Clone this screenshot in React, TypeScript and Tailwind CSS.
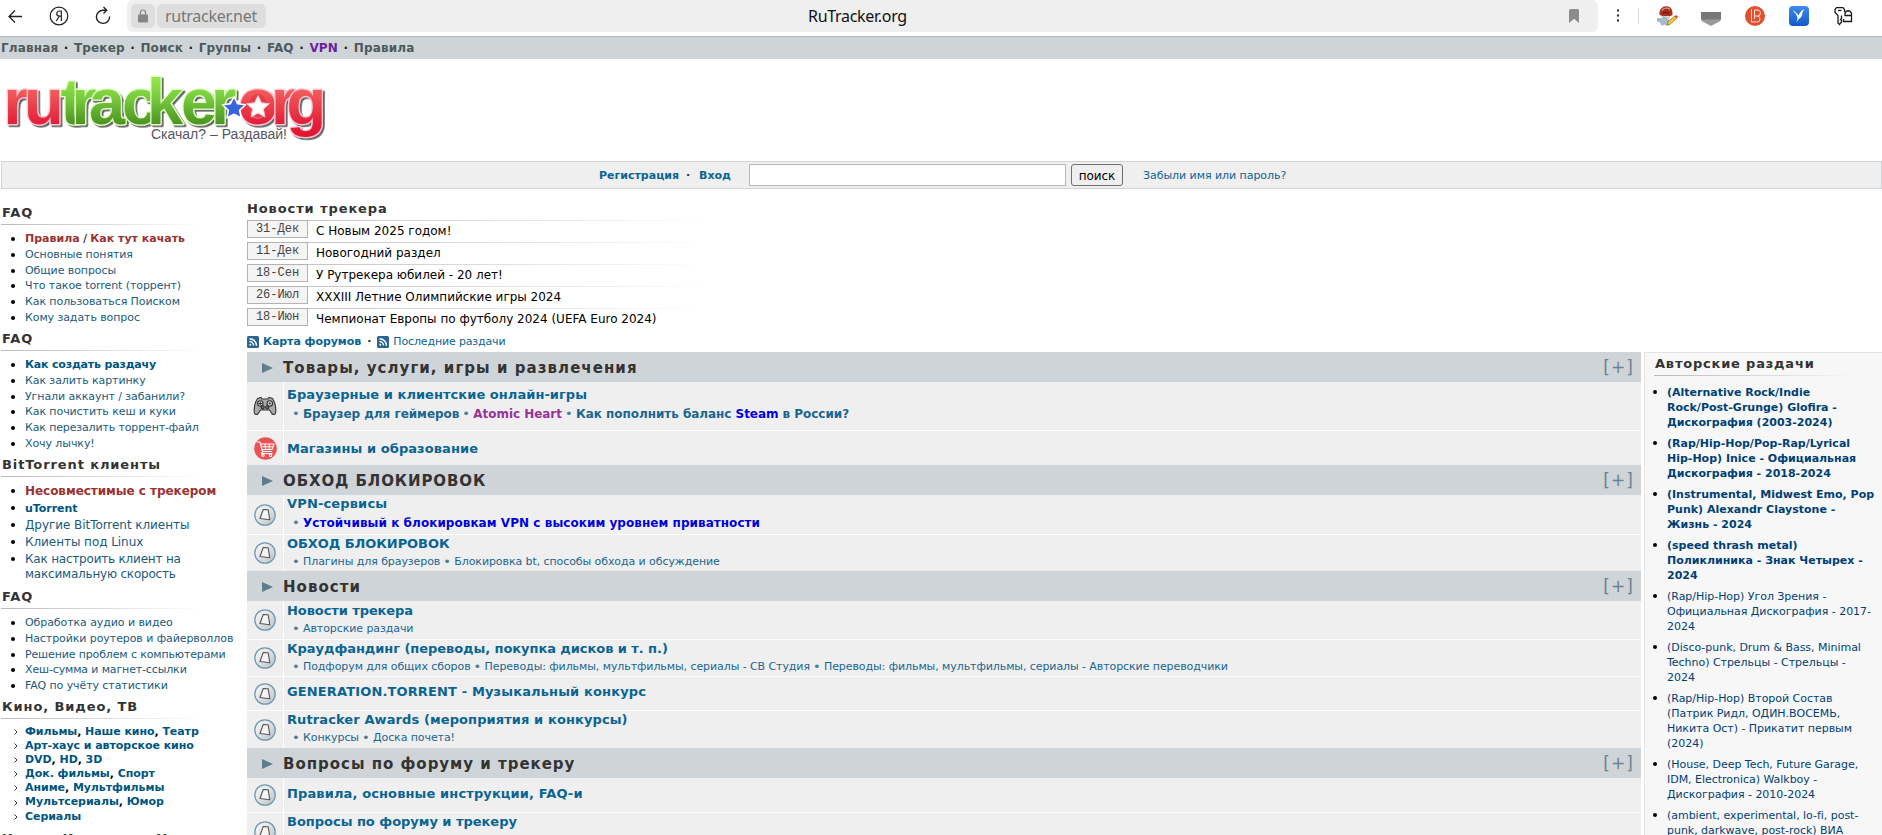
import type { ReactNode } from "react";

type Sub = { text: ReactNode; color?: string };
type Forum = {
  title: string;
  subs?: Sub[];
  icon?: "pad" | "cart";
  bold?: boolean;
  height: string;
  pad: string;
  track?: string;
};
type Category = { title: string; track: string; forums: Forum[] };

const categories: Category[] = [
  {
    title: "Товары, услуги, игры и развлечения",
    track: "tracking-[1.05px]",
    forums: [
      {
        title: "Браузерные и клиентские онлайн-игры",
        icon: "pad",
        bold: true,
        height: "h-[48px]",
        pad: "pt-[4px]",
        track: "tracking-[0.05px]",
        subs: [
          { text: "Браузер для геймеров", color: "tracking-[-0.04px]" },
          { text: "Atomic Heart", color: "text-[#993399] tracking-[-0.04px]" },
          {
            color: "tracking-[-0.04px]",
            text: (
              <>
                Как пополнить баланс <span className="text-[#0000dd]">Steam</span> в России?
              </>
            ),
          },
        ],
      },
      {
        title: "Магазины и образование",
        icon: "cart",
        height: "h-[35px]",
        pad: "pt-[9px]",
        track: "tracking-[0.08px]",
      },
    ],
  },
  {
    title: "ОБХОД БЛОКИРОВОК",
    track: "tracking-[0.9px]",
    forums: [
      {
        title: "VPN-сервисы",
        bold: true,
        height: "h-[39px]",
        pad: "pt-0",
        track: "tracking-[0.15px]",
        subs: [
          {
            text: "Устойчивый к блокировкам VPN с высоким уровнем приватности",
            color: "text-[#0000dd] tracking-[0.05px]",
          },
        ],
      },
      {
        title: "ОБХОД БЛОКИРОВОК",
        height: "h-[37px]",
        pad: "pt-0",
        track: "tracking-[-0.07px]",
        subs: [{ text: "Плагины для браузеров" }, { text: "Блокировка bt, способы обхода и обсуждение" }],
      },
    ],
  },
  {
    title: "Новости",
    track: "tracking-[1.05px]",
    forums: [
      {
        title: "Новости трекера",
        height: "h-[38px]",
        pad: "pt-[1px]",
        track: "tracking-[-0.08px]",
        subs: [{ text: "Авторские раздачи" }],
      },
      {
        title: "Краудфандинг (переводы, покупка дисков и т. п.)",
        height: "h-[37px]",
        pad: "pt-0",
        track: "tracking-[-0.06px]",
        subs: [
          { text: "Подфорум для общих сборов" },
          { text: "Переводы: фильмы, мультфильмы, сериалы - СВ Студия" },
          { text: "Переводы: фильмы, мультфильмы, сериалы - Авторские переводчики" },
        ],
      },
      {
        title: "GENERATION.TORRENT - Музыкальный конкурс",
        height: "h-[34px]",
        pad: "pt-[6px]",
        track: "tracking-[0.14px]",
      },
      {
        title: "Rutracker Awards (мероприятия и конкурсы)",
        height: "h-[38px]",
        pad: "pt-0",
        track: "tracking-[0.1px]",
        subs: [{ text: "Конкурсы" }, { text: "Доска почета!" }],
      },
    ],
  },
  {
    title: "Вопросы по форуму и трекеру",
    track: "tracking-[0.98px]",
    forums: [
      {
        title: "Правила, основные инструкции, FAQ-и",
        height: "h-[34px]",
        pad: "pt-[7px]",
        track: "tracking-[0.12px]",
      },
      {
        title: "Вопросы по форуму и трекеру",
        height: "h-[38px]",
        pad: "pt-0",
        track: "tracking-[-0.02px]",
        subs: [{ text: "Предложения по улучшению форума и трекера" }],
      },
    ],
  },
];

const news = [
  ["31-Дек", "С Новым 2025 годом!"],
  ["11-Дек", "Новогодний раздел"],
  ["18-Сен", "У Рутрекера юбилей - 20 лет!"],
  ["26-Июл", "XXXIII Летние Олимпийские игры 2024"],
  ["18-Июн", "Чемпионат Европы по футболу 2024 (UEFA Euro 2024)"],
];

const releases = [
  { bold: true, lines: ["(Alternative Rock/Indie", "Rock/Post-Grunge) Glofira -", "Дискография (2003-2024)"] },
  { bold: true, lines: ["(Rap/Hip-Hop/Pop-Rap/Lyrical", "Hip-Hop) Inice - Официальная", "Дискография - 2018-2024"] },
  { bold: true, lines: ["(Instrumental, Midwest Emo, Pop", "Punk) Alexandr Claystone -", "Жизнь - 2024"] },
  { bold: true, lines: ["(speed thrash metal)", "Поликлиника - Знак Четырех -", "2024"] },
  { lines: ["(Rap/Hip-Hop) Угол Зрения -", "Официальная Дискография - 2017-", "2024"] },
  { lines: ["(Disco-punk, Drum & Bass, Minimal", "Techno) Стрельцы - Стрельцы -", "2024"] },
  { lines: ["(Rap/Hip-Hop) Второй Состав", "(Патрик Ридл, ОДИН.ВОСЕМЬ,", "Никита Ост) - Прикатит первым", "(2024)"] },
  { lines: ["(House, Deep Tech, Future Garage,", "IDM, Electronica) Walkboy -", "Дискография - 2010-2024"] },
  { lines: ["(ambient, experimental, lo-fi, post-", "punk, darkwave, post-rock) ВИА"] },
];

const kino = [
  ["Фильмы", "Наше кино", "Театр"],
  ["Арт-хаус и авторское кино"],
  ["DVD", "HD", "3D"],
  ["Док. фильмы", "Спорт"],
  ["Аниме", "Мультфильмы"],
  ["Мультсериалы", "Юмор"],
  ["Сериалы"],
];

function BrowserBar() {
  return (
    <header className="flex h-9 items-start bg-white font-['Noto_Sans',sans-serif]">
      <div className="flex h-8 w-[127px] shrink-0 items-center">
        <svg className="ml-2 h-4 w-[14px]" viewBox="0 0 14 16" fill="none" stroke="#222" strokeWidth="1.3">
          <path d="M14 8.5H1M7 2.5l-6 6 6 6" />
        </svg>
        <svg className="ml-[27px] h-5 w-5" viewBox="0 0 20 20" fill="none" stroke="#222" strokeWidth="1.2">
          <circle cx="10" cy="10" r="8.8" />
          <path d="M12.3 15V5h-1.8c-3.7 0-3.7 5.2 0 5.2h1.8M10.2 10.2L7.3 15" />
        </svg>
        <svg className="ml-[26px] h-5 w-4" viewBox="0 0 16 20" fill="none" stroke="#222" strokeWidth="1.4">
          <path d="M14.6 10.5A6.6 6.6 0 1 1 8 4.2h3.5M8.5 1l3.2 3.2-3.2 3.2" />
        </svg>
      </div>
      <div className="flex h-8 w-[1471px] shrink-0 items-center rounded-[6px] bg-[#efefef] pl-1">
        <div className="flex h-6 w-6 items-center justify-center rounded-[5px] bg-[#dedede]">
          <svg className="h-[14px] w-[10px]" viewBox="0 0 10 14">
            <path d="M2.5 6V3.5a2.5 2.5 0 0 1 5 0V6" fill="none" stroke="#858585" strokeWidth="1.2" />
            <rect y="5.5" width="10" height="8" rx="1" fill="#858585" />
          </svg>
        </div>
        <div className="ml-[2px] flex h-6 w-[109px] items-center rounded-[5px] bg-[#dedede] pl-[8px] text-[16px] tracking-[-0.3px] text-[#777]">
          rutracker.net
        </div>
        <div className="ml-[542px] w-[110px] text-[16px] tracking-[-0.3px] text-[#111]">RuTracker.org</div>
        <svg className="ml-auto mr-[19px] h-[14px] w-[10px]" viewBox="0 0 10 14">
          <path d="M0 1.5Q0 0 1.5 0h7Q10 0 10 1.5V14L5 9.8 0 14z" fill="#8b8b8b" />
        </svg>
      </div>
      <div className="flex h-8 flex-1 items-center">
        <svg className="ml-[17px] h-[14px] w-[6px]" viewBox="0 0 6 14" fill="#222">
          <rect x="2" y="0.5" width="2" height="2" />
          <rect x="2" y="5.5" width="2" height="2" />
          <rect x="2" y="10.5" width="2" height="2" />
        </svg>
        <span className="ml-[17px] h-4 w-px bg-[#ddd]" />
        <svg className="ml-[18px] h-5 w-[22px]" viewBox="0 0 22 20">
          <path d="M2.5 8.500C2 3 6 0 9.500.3c4 0 6.500 3 6 8.700-4 2.500-10 2-13-.5z" fill="#a63022" />
          <path d="M5 4.500c2-3 6-3 8-1" stroke="#e08a76" strokeWidth="1.5" fill="none" />
          <path d="M6 7.500c1-1.500 4-1.500 6 0" stroke="#4d0f0a" fill="none" />
          <path d="M4 10h9v3H6z" fill="#d9cfc9" />
          <path d="M.5 12.500l4 .5 2-2 5 3-1 5-3.500-1-2 1.500-1.500-3.500-3-1z" fill="#a9bccf" stroke="#7c8fa3" strokeWidth=".6" />
          <path d="M10 19.500l1-4 7-5.500 2 2-6.500 6z" fill="#f0c93a" stroke="#8a6d17" strokeWidth=".7" />
          <path d="M17.500 10.500L19 9l2 1.500-1.300 1.800z" fill="#d3483c" />
        </svg>
        <svg className="ml-[22px] mt-[6px] h-[14px] w-5" viewBox="0 0 20 14">
          <path d="M0 0h20v6.5c0 1.500-.5 2.500-2 3.300L10 14l-8-4.200C.5 9 0 8 0 6.500z" fill="#999" />
          <path d="M0 0h20v7.5H0z" fill="#777" />
        </svg>
        <svg className="ml-[24px] h-5 w-5" viewBox="0 0 20 20" fill="none" stroke="#fbe3dc" strokeWidth="1">
          <circle cx="10" cy="10" r="10" fill="#e2502f" stroke="none" />
          <path d="M6.5 3.500v12.500h5.500a3 3 0 0 0 0-6H9.500M9.500 13V4H12a2.800 2.800 0 0 1 1 5.800" />
        </svg>
        <svg className="ml-[24px] h-5 w-5" viewBox="0 0 20 20">
          <defs>
            <linearGradient id="bird" x1="0" y1="0" x2="0" y2="1">
              <stop stopColor="#3f8be8" />
              <stop offset="1" stopColor="#1559c8" />
            </linearGradient>
          </defs>
          <rect width="20" height="20" rx="4" fill="url(#bird)" />
          <path d="M3.5 4.500c2.500 1 4.500 2.500 6 5 .8-2.500 2.500-5 6-6.500-1.500 2-2.200 4-2.700 6.500-.4 2-2 3-3 3.500L7.500 16.500l1-4C8.300 9.500 6.500 7 3.500 4.500z" fill="#fff" />
        </svg>
        <svg className="ml-[25px] h-5 w-[19px]" viewBox="0 0 19 20" fill="none" stroke="#1b1b1b" strokeWidth="1.3">
          <path d="M10.500 6V3.500L9 1.700H2.500L1 3.500v3l3 3V17l1.500 1.500L7.500 16v-1.500l-1-1 1-1V9.500" />
          <path d="M4 4.500h3.500" />
          <path d="M9.500 13v2.500h8V7l-2-2h-3l-1.500 2v2.500h6.500" />
        </svg>
      </div>
    </header>
  );
}

function Logo() {
  return (
    <svg className="h-[101px] w-[340px]" viewBox="0 59 340 101" fontFamily="'Liberation Sans', Arial, sans-serif">
      <defs>
        <linearGradient id="red" gradientUnits="userSpaceOnUse" x1="0" y1="88" x2="0" y2="138">
          <stop stopColor="#f4605f" />
          <stop offset="0.7" stopColor="#e3203a" />
          <stop offset="1" stopColor="#e01530" />
        </linearGradient>
        <linearGradient id="green" gradientUnits="userSpaceOnUse" x1="0" y1="77" x2="0" y2="124">
          <stop stopColor="#96ea4c" />
          <stop offset="0.5" stopColor="#74c63c" />
          <stop offset="1" stopColor="#4c9422" />
        </linearGradient>
        <filter id="drop" x="-5%" y="-10%" width="112%" height="125%">
          <feDropShadow dx="1.8" dy="1.8" stdDeviation="0.7" floodColor="#333" floodOpacity="0.75" />
        </filter>
      </defs>
      <g fontSize="65" fontWeight="bold" strokeWidth="2.6" paintOrder="stroke" strokeLinejoin="round" filter="url(#drop)">
        <text x="3.5 24" y="123.7" fill="url(#red)" stroke="#ffc9d6">ru</text>
        <text x="238 271 286.5" y="123.7" fill="url(#red)" stroke="#ffc9d6">org</text>
        <text x="60.5 71.5 89 122 147 181 211" y="123.7" fill="url(#green)" stroke="#e2ffc8">tracker</text>
      </g>
      <ellipse cx="258" cy="106" rx="9" ry="12" fill="#e73c49" />
      <g strokeLinejoin="round">
        <path d="M234 96.500l3.500 7.200 8 1-5.900 5.500 1.500 7.800-7.100-3.800-7.100 3.800 1.500-7.800-5.900-5.500 8-1z" fill="#3564dd" stroke="#fff" strokeWidth="1.5" />
        <path d="M258 95.500l3.300 7.300 8 .9-6 5.400 1.700 7.900-7-4-7 4 1.700-7.900-6-5.400 8-.9z" fill="#fff" stroke="#ffc9d6" strokeWidth="1" />
      </g>
      <text x="151" y="138.5" fontSize="14" textLength="136" fill="#55555f">Скачал? – Раздавай!</text>
    </svg>
  );
}

function TopNav() {
  const items = ["Главная", "Трекер", "Поиск", "Группы", "FAQ", "VPN", "Правила"];
  return (
    <nav className="h-[23px] border-t border-[#b4b9bd] bg-[#cfd4d8] pl-px text-[12px] font-bold leading-[22px] tracking-[0.15px] text-[#4c5a5e]">
      {items.map((item, i) => (
        <span key={item}>
          {i > 0 && <span className="px-[5.5px] text-[#222]">·</span>}
          <span className={item === "VPN" ? "text-[#6b1f9e]" : ""}>{item}</span>
        </span>
      ))}
    </nav>
  );
}

function LoginBar() {
  return (
    <div className="ml-px flex h-7 items-center border border-[#cfd4d8] bg-[#efefef] text-[11px] text-[#0a6492]">
      <b className="ml-[597px] w-[81px] pt-[2px]">Регистрация</b>
      <b className="ml-[6px] w-[13px] pt-[2px] text-[#333]">·</b>
      <b className="w-[50px] pt-[2px]">Вход</b>
      <input className="h-[22px] w-[317px] border border-[#b5b9bc] bg-white" />
      <button className="ml-[5px] h-[22px] w-[52px] rounded-[3px] border border-[#6f6f6f] bg-[#efefef] pt-px text-[12px] tracking-[-0.1px] text-black">
        поиск
      </button>
      <span className="ml-[20px] pt-[2px] tracking-[-0.05px]">Забыли имя или пароль?</span>
    </div>
  );
}

function SideHeading({ children }: { children: ReactNode }) {
  return (
    <div>
      <h3 className="pl-[2px] text-[13px] font-bold leading-[22px] tracking-[0.9px] text-[#333]">{children}</h3>
      <div className="ml-px h-px w-[200px] bg-linear-to-r from-[#b9b9b9] to-white" />
    </div>
  );
}

function Bullet({ children, className = "" }: { children: ReactNode; className?: string }) {
  return (
    <li className={`flex items-start whitespace-nowrap ${className}`}>
      <span className="mr-[10px] mt-[6px] h-[4px] w-[4px] shrink-0 rounded-full bg-black" />
      <span>{children}</span>
    </li>
  );
}

const sideList = "pl-[11px] pt-[6px] text-[11px] leading-[15.8px] tracking-[-0.08px] text-[#1a5a7c]";

function LeftSidebar() {
  return (
    <aside className="w-[247px] shrink-0 pt-[13px]">
      <div className="h-[126px]">
        <SideHeading>FAQ</SideHeading>
        <ul className={sideList}>
          <Bullet className="tracking-normal text-black">
            <b className="text-[#993333]">Правила</b> / <b className="text-[#993333]">Как тут качать</b>
          </Bullet>
          <Bullet>Основные понятия</Bullet>
          <Bullet>Общие вопросы</Bullet>
          <Bullet>Что такое torrent (торрент)</Bullet>
          <Bullet>Как пользоваться Поиском</Bullet>
          <Bullet>Кому задать вопрос</Bullet>
        </ul>
      </div>
      <div className="h-[126px]">
        <SideHeading>FAQ</SideHeading>
        <ul className={sideList}>
          <Bullet className="font-bold tracking-[-0.18px] text-[#005580]">Как создать раздачу</Bullet>
          <Bullet>Как залить картинку</Bullet>
          <Bullet>Угнали аккаунт / забанили?</Bullet>
          <Bullet>Как почистить кеш и куки</Bullet>
          <Bullet className="tracking-[-0.14px]">Как перезалить торрент-файл</Bullet>
          <Bullet>Хочу лычку!</Bullet>
        </ul>
      </div>
      <div className="h-[132px]">
        <SideHeading>BitTorrent клиенты</SideHeading>
        <ul className="pl-[11px] pt-[6px] text-[12px] leading-[17px] tracking-[-0.05px] text-[#1a5a7c]">
          <Bullet className="font-bold text-[#993333]">Несовместимые с трекером</Bullet>
          <Bullet className="text-[11px] font-bold text-[#005580]">uTorrent</Bullet>
          <Bullet>Другие BitTorrent клиенты</Bullet>
          <Bullet>Клиенты под Linux</Bullet>
          <Bullet>
            <span className="tracking-[-0.2px]">Как настроить клиент на</span>
            <span className="block leading-[13px] tracking-[-0.2px]">максимальную скорость</span>
          </Bullet>
        </ul>
      </div>
      <div className="h-[110px]">
        <SideHeading>FAQ</SideHeading>
        <ul className={sideList}>
          <Bullet>Обработка аудио и видео</Bullet>
          <Bullet>Настройки роутеров и файерволлов</Bullet>
          <Bullet className="tracking-[-0.14px]">Решение проблем с компьютерами</Bullet>
          <Bullet className="tracking-[-0.14px]">Хеш-сумма и магнет-ссылки</Bullet>
          <Bullet>FAQ по учёту статистики</Bullet>
        </ul>
      </div>
      <div className="h-[132px]">
        <SideHeading>Кино, Видео, ТВ</SideHeading>
        <ul className="pl-[14px] pt-[6px] text-[11px] font-bold leading-[14.1px] tracking-[-0.06px] text-black">
          {kino.map((row) => (
            <li key={row[0]} className="flex items-center">
              <svg className="mr-[7px] h-[6px] w-[4px]" viewBox="0 0 4 6" fill="none" stroke="#333">
                <path d="M.5.5L3 3 .5 5.500" />
              </svg>
              <span>
                {row.map((name, i) => (
                  <span key={name}>
                    {i > 0 && ", "}
                    <span className="text-[#005580]">{name}</span>
                  </span>
                ))}
              </span>
            </li>
          ))}
        </ul>
      </div>
      <SideHeading>Книги, Ин. языки, Уроки</SideHeading>
    </aside>
  );
}

function RssIcon() {
  return (
    <svg className="h-3 w-3 shrink-0" viewBox="0 0 12 12" fill="none" stroke="#fff" strokeWidth="1.4">
      <rect width="12" height="12" rx="1.5" fill="#2a6690" stroke="none" />
      <path d="M2.5 5.500a4 4 0 0 1 4 4M2.500 2.700a7 7 0 0 1 7 7" />
      <circle cx="3.3" cy="8.8" r="1" fill="#fff" stroke="none" />
    </svg>
  );
}

function News() {
  return (
    <section className="h-[153px]">
      <h3 className="h-[21px] text-[13px] font-bold leading-[20px] tracking-[0.9px] text-[#333]">Новости трекера</h3>
      {news.map(([date, text]) => (
        <div key={date} className="flex h-[22px] items-start">
          <div className="h-[18px] w-[61px] border border-[#b3b3b3] bg-[#f4f4f4] text-center font-['Liberation_Mono',monospace] text-[12px] leading-[16px] text-[#444]">
            {date}
          </div>
          <div className="w-[400px]">
            <div className="h-px bg-linear-to-r from-[#c4c4c4] to-white" />
            <div className="whitespace-nowrap pl-[8px] text-[12px] leading-[20px] text-black">{text}</div>
          </div>
        </div>
      ))}
      <div className="mt-[4px] flex h-4 items-center text-[11px] text-[#0a6492]">
        <RssIcon />
        <b className="ml-[4px] tracking-[-0.06px]">Карта форумов</b>
        <b className="mx-[6px] text-[#222]">·</b>
        <RssIcon />
        <span className="ml-[4px] tracking-[-0.15px]">Последние раздачи</span>
      </div>
    </section>
  );
}

function ForumIcon({ kind }: { kind?: "pad" | "cart" }) {
  if (kind === "pad") {
    return (
      <svg className="h-[22px] w-6" viewBox="0 0 24 22" stroke="#333" strokeWidth="1.1">
        <path d="M4.5 3.500L8 2.500l1 1.500h6l1-1.500 3.500 1c2 3 3.500 9 3.300 13.500-.3 2.800-2.300 3.300-4 1.500L16.500 15h-9l-2.300 3.500c-1.700 1.800-3.700 1.300-4-1.500C1 12.500 2.500 6.500 4.500 3.500z" fill="#a9a9a9" />
        <circle cx="7.3" cy="8.5" r="2.7" fill="#dcdcdc" />
        <circle cx="16.8" cy="8.5" r="2.7" fill="#dcdcdc" />
        <circle cx="9.7" cy="12.3" r="1.6" fill="#666" />
        <circle cx="14.3" cy="12.3" r="1.6" fill="#666" />
        <path d="M7.300 6.700v3.600M5.500 8.500h3.600M15.800 8.500h2M16.800 7.500v2" fill="none" />
      </svg>
    );
  }
  if (kind === "cart") {
    return (
      <svg className="h-[23px] w-[23px]" viewBox="0 0 23 23" fill="none" stroke="#fff" strokeWidth="1.1">
        <circle cx="11.5" cy="11.5" r="11.3" fill="#ea5353" stroke="none" />
        <path d="M2.5 5h3.500l2.500 9.500h9.500M6.500 7h13.500l-2 5.500H8M7.200 9.700h11.800M11 7l.7 5.500M15.500 7l-.5 5.500M8.500 14.500l-1 2h11" />
        <circle cx="9" cy="18.3" r="1.2" />
        <circle cx="16.5" cy="18.3" r="1.2" />
      </svg>
    );
  }
  return (
    <svg className="h-[22px] w-[22px]" viewBox="0 0 22 22">
      <defs>
        <linearGradient id="disc" x1="0" y1="0" x2="1" y2="1">
          <stop stopColor="#fff" />
          <stop offset="1" stopColor="#bcc0c3" />
        </linearGradient>
      </defs>
      <circle cx="11" cy="11" r="10.2" fill="url(#disc)" stroke="#6f9ab2" strokeWidth="1.3" />
      <path d="M9.200 5.500l5 .3 1.600 10-9.800-1.300z" fill="#f4f4f4" stroke="#555" strokeWidth="1.1" strokeLinejoin="round" />
    </svg>
  );
}

function ForumRow({ forum }: { forum: Forum }) {
  return (
    <div className={`flex border-t border-white bg-[#efefef] first:border-t-0 ${forum.height}`}>
      <div className="flex w-[37px] shrink-0 items-center justify-center border-r border-white">
        <ForumIcon kind={forum.icon} />
      </div>
      <div className={`pl-[3px] ${forum.pad}`}>
        <div className={`whitespace-nowrap text-[13px] font-bold leading-[18px] text-[#0a6492] ${forum.track ?? ""}`}>
          {forum.title}
        </div>
        {forum.subs && (
          <div
            className={`flex whitespace-nowrap pl-[5px] text-[#1a6690] ${
              forum.bold ? "text-[12px] font-bold leading-[20px]" : "text-[11px] leading-[17px] tracking-[-0.08px]"
            }`}
          >
            {forum.subs.map((sub, i) => (
              <span key={i} className="flex">
                <span className="w-[11px] text-[13px] font-normal text-[#4d7f9a]">•</span>
                <span className={`mr-[3px] ${sub.color ?? ""}`}>{sub.text}</span>
              </span>
            ))}
          </div>
        )}
      </div>
    </div>
  );
}

function Forums() {
  return (
    <div className="w-[1394px] shrink-0">
      {categories.map((cat) => (
        <section key={cat.title}>
          <h2 className="flex h-[30px] items-center bg-[#cfd4d8] pl-[15px] pt-[2px]">
            <svg className="h-[10px] w-[11px]" viewBox="0 0 11 10">
              <path d="M0 0l11 5-11 5z" fill="#607d8b" />
            </svg>
            <span className={`ml-[10px] text-[15px] font-bold text-[#333] ${cat.track}`}>{cat.title}</span>
            <span className="ml-auto mr-[7px] text-[17px] tracking-[1.1px] text-[#6b8290]">[+]</span>
          </h2>
          <div>
            {cat.forums.map((forum) => (
              <ForumRow key={forum.title} forum={forum} />
            ))}
          </div>
        </section>
      ))}
    </div>
  );
}

function RightSidebar() {
  return (
    <aside className="ml-[3px] h-[500px] flex-1 border-l border-t border-[#e3e3e3] bg-[#f7f7f7] pl-[9px]">
      <h3 className="pl-px text-[13px] font-bold leading-[22px] tracking-[0.8px] text-[#333]">Авторские раздачи</h3>
      <div className="h-px w-[201px] bg-linear-to-r from-[#b9b9b9] to-[#f7f7f7]" />
      <ul className="pt-[9px] text-[11px] leading-[15px] text-[#003f73]">
        {releases.map((item) => (
          <li
            key={item.lines[1]}
            className={`flex whitespace-nowrap pb-[6px] ${item.bold ? "font-bold" : "tracking-[-0.03px]"}`}
          >
            <span className="-ml-px mr-[10px] mt-[5px] h-[4px] w-[4px] shrink-0 rounded-full bg-black" />
            <span>
              {item.lines.map((line) => (
                <span key={line} className="block">
                  {line}
                </span>
              ))}
            </span>
          </li>
        ))}
      </ul>
    </aside>
  );
}

export default function App() {
  return (
    <div className="h-[835px] w-[1882px] overflow-hidden bg-white font-['DejaVu_Sans',Verdana,sans-serif] text-black">
      <BrowserBar />
      <TopNav />
      <div className="h-[102px]">
        <Logo />
      </div>
      <LoginBar />
      <div className="flex">
        <LeftSidebar />
        <main className="flex-1 pt-[10px]">
          <News />
          <div className="flex">
            <Forums />
            <RightSidebar />
          </div>
        </main>
      </div>
    </div>
  );
}
